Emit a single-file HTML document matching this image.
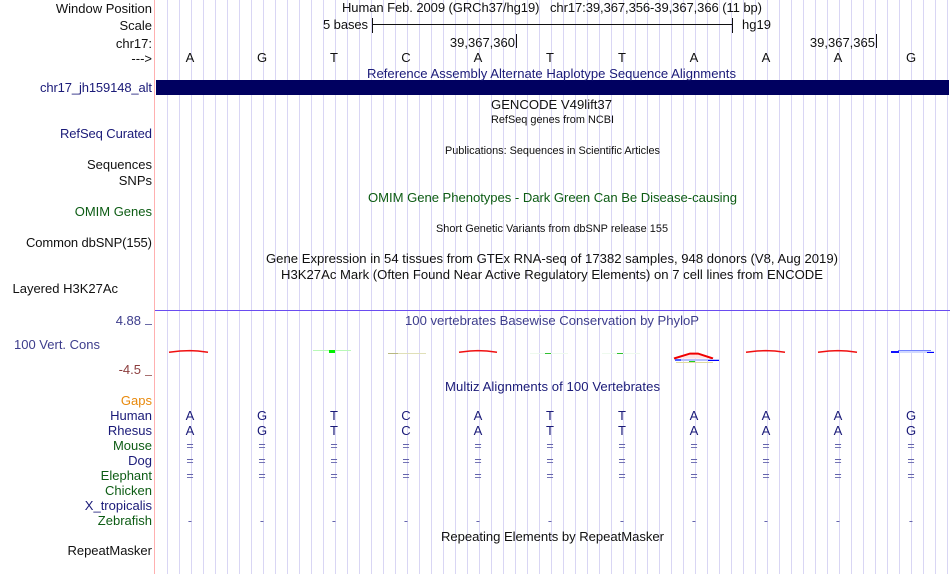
<!DOCTYPE html>
<html><head><meta charset="utf-8"><style>
html,body{margin:0;padding:0;background:#fff;width:950px;height:574px;overflow:hidden}
svg{display:block}
text{font-family:"Liberation Sans",sans-serif;font-size:13px;fill:#111}
.e{text-anchor:end}.m{text-anchor:middle}
.c{text-anchor:middle;font-size:13.1px}
.n{fill:#1a1a78}.g{fill:#0d5c14}.p{fill:#3d3d8c}
.s{font-size:10.9px;text-anchor:middle}
.eq{font-size:12.5px;fill:#6464ac;text-anchor:middle}
</style></head><body>
<svg width="950" height="574" viewBox="0 0 950 574" xmlns="http://www.w3.org/2000/svg">
<path d="M167.5 0V574M179.5 0V574M191.5 0V574M203.5 0V574M215.5 0V574M227.5 0V574M239.5 0V574M251.5 0V574M263.5 0V574M275.5 0V574M287.5 0V574M299.5 0V574M311.5 0V574M323.5 0V574M335.5 0V574M347.5 0V574M359.5 0V574M371.5 0V574M383.5 0V574M395.5 0V574M407.5 0V574M419.5 0V574M431.5 0V574M443.5 0V574M455.5 0V574M467.5 0V574M479.5 0V574M491.5 0V574M503.5 0V574M515.5 0V574M527.5 0V574M539.5 0V574M551.5 0V574M563.5 0V574M575.5 0V574M587.5 0V574M599.5 0V574M611.5 0V574M623.5 0V574M635.5 0V574M647.5 0V574M659.5 0V574M671.5 0V574M683.5 0V574M695.5 0V574M707.5 0V574M719.5 0V574M731.5 0V574M743.5 0V574M755.5 0V574M767.5 0V574M779.5 0V574M791.5 0V574M803.5 0V574M815.5 0V574M827.5 0V574M839.5 0V574M851.5 0V574M863.5 0V574M875.5 0V574M887.5 0V574M899.5 0V574M911.5 0V574M923.5 0V574M935.5 0V574M947.5 0V574" stroke="#d9d6f4" stroke-width="1" fill="none"/>
<rect x="154" y="0" width="1" height="574" fill="#ffb0b0"/>
<rect x="156" y="80" width="793" height="15" fill="#000060"/>
<rect x="155" y="310" width="795" height="1" fill="#6a4cf0"/>

<g class="labels">
<text class="e" x="152" y="13">Window Position</text>
<text class="e" x="152" y="30">Scale</text>
<text class="e" x="152" y="48">chr17:</text>
<text class="e" x="152" y="63">---&gt;</text>
<text class="e n" x="152" y="92" textLength="112">chr17_jh159148_alt</text>
<text class="e n" x="152" y="138" textLength="92">RefSeq Curated</text>
<text class="e" x="152" y="169">Sequences</text>
<text class="e" x="152" y="185">SNPs</text>
<text class="e g" x="152" y="216">OMIM Genes</text>
<text class="e" x="152" y="247" textLength="126">Common dbSNP(155)</text>
<text class="e" x="118" y="293">Layered H3K27Ac</text>
<text class="e p" x="141" y="325">4.88</text>
<text class="e p" x="100" y="349">100 Vert. Cons</text>
<text class="e" x="141" y="374" style="fill:#8c3d3d">-4.5</text>
<text class="e" x="152" y="405" style="fill:#e8890c">Gaps</text>
<text class="e n" x="152" y="420">Human</text>
<text class="e n" x="152" y="435">Rhesus</text>
<text class="e g" x="152" y="450">Mouse</text>
<text class="e n" x="152" y="465">Dog</text>
<text class="e g" x="152" y="480">Elephant</text>
<text class="e g" x="152" y="495">Chicken</text>
<text class="e n" x="152" y="510">X_tropicalis</text>
<text class="e g" x="152" y="525">Zebrafish</text>
<text class="e" x="152" y="555">RepeatMasker</text>
</g>
<rect x="145" y="324" width="7" height="1" fill="#6b6ba8"/>
<rect x="145" y="375" width="7" height="1" fill="#a87070"/>

<text x="342" y="12" textLength="420">Human Feb. 2009 (GRCh37/hg19)&#160;&#160;&#160;chr17:39,367,356-39,367,366 (11 bp)</text>
<text class="e" x="368" y="29" textLength="45">5 bases</text>
<text x="742" y="29">hg19</text>
<rect x="372" y="18" width="1" height="15" fill="#111"/>
<rect x="732" y="18" width="1" height="15" fill="#111"/>
<rect x="372" y="24" width="361" height="1" fill="#111"/>
<text class="e" x="515" y="47">39,367,360</text>
<rect x="516" y="34" width="1" height="14" fill="#111"/>
<text class="e" x="875" y="47">39,367,365</text>
<rect x="876" y="34" width="1" height="14" fill="#111"/>

<g>
<text class="m" x="190" y="62">A</text><text class="m" x="262" y="62">G</text><text class="m" x="334" y="62">T</text><text class="m" x="406" y="62">C</text><text class="m" x="478" y="62">A</text><text class="m" x="550" y="62">T</text><text class="m" x="622" y="62">T</text><text class="m" x="694" y="62">A</text><text class="m" x="766" y="62">A</text><text class="m" x="838" y="62">A</text><text class="m" x="911" y="62">G</text>
</g>

<text class="c n" x="551.5" y="78" textLength="369">Reference Assembly Alternate Haplotype Sequence Alignments</text>
<text class="c" x="551.5" y="109" textLength="121">GENCODE V49lift37</text>
<text class="s" x="552.5" y="123" textLength="123">RefSeq genes from NCBI</text>
<text class="s" x="552.5" y="154" textLength="215">Publications: Sequences in Scientific Articles</text>
<text class="c g" x="552.5" y="202" textLength="369">OMIM Gene Phenotypes - Dark Green Can Be Disease-causing</text>
<text class="s" x="552" y="232" textLength="232">Short Genetic Variants from dbSNP release 155</text>
<text class="c" x="552" y="263" textLength="572">Gene Expression in 54 tissues from GTEx RNA-seq of 17382 samples, 948 donors (V8, Aug 2019)</text>
<text class="c" x="552" y="279" textLength="542">H3K27Ac Mark (Often Found Near Active Regulatory Elements) on 7 cell lines from ENCODE</text>
<text class="c p" x="552" y="325" textLength="294">100 vertebrates Basewise Conservation by PhyloP</text>
<text class="c n" x="552.5" y="391" textLength="215">Multiz Alignments of 100 Vertebrates</text>
<text class="c" x="552.5" y="541" textLength="223">Repeating Elements by RepeatMasker</text>

<g fill="none" stroke="#f01010" stroke-width="1.5">
<path d="M169 352.3 L180 351 L190 350.6 L198 351 L208 352.3"/>
<path d="M459 352.3 L470 351 L478 350.6 L487 351 L497 352.3"/>
<path d="M746 352.3 L757 351 L766 350.6 L775 351 L785 352.3"/>
<path d="M818 352.3 L829 351 L838 350.6 L847 351 L857 352.3"/>
</g>
<path d="M690 354.5 L698 354.5 L708 358.5 L680 358.5Z" fill="#ffe4e4"/>
<path d="M674 358.5 L690 353.6 L698 353.6 L713 358.5" fill="none" stroke="#f00000" stroke-width="2"/>
<rect x="675" y="359" width="44" height="2" fill="#b8c0ff"/>
<rect x="675" y="359" width="6" height="2" fill="#5060ff"/>
<rect x="708" y="360" width="11" height="1" fill="#0000ff"/>
<rect x="689" y="361" width="6" height="1" fill="#20d020"/>
<rect x="676" y="362" width="37" height="1" fill="#e0dca0"/>

<rect x="313" y="350" width="38" height="1" fill="#b8f8b8"/>
<rect x="329" y="350" width="6" height="3" fill="#00f000"/>
<rect x="388" y="353" width="38" height="1" fill="#e0e0b8"/>
<rect x="388" y="353" width="10" height="1" fill="#b8b880"/>
<rect x="530" y="353" width="38" height="1" fill="#eefaee"/>
<rect x="545" y="353" width="6" height="1" fill="#30c030"/>
<rect x="602" y="353" width="38" height="1" fill="#eefaee"/>
<rect x="617" y="353" width="6" height="1" fill="#30c030"/>
<rect x="891" y="351" width="43" height="2" fill="#d0d8ff"/>
<rect x="898" y="350" width="33" height="1" fill="#7080ff"/>
<rect x="891" y="351" width="8" height="2" fill="#1010ff"/>
<rect x="927" y="352" width="7" height="1" fill="#0000ff"/>

<g>
<text class="m n" x="190" y="420">A</text><text class="m n" x="262" y="420">G</text><text class="m n" x="334" y="420">T</text><text class="m n" x="406" y="420">C</text><text class="m n" x="478" y="420">A</text><text class="m n" x="550" y="420">T</text><text class="m n" x="622" y="420">T</text><text class="m n" x="694" y="420">A</text><text class="m n" x="766" y="420">A</text><text class="m n" x="838" y="420">A</text><text class="m n" x="911" y="420">G</text>
<text class="m n" x="190" y="435">A</text><text class="m n" x="262" y="435">G</text><text class="m n" x="334" y="435">T</text><text class="m n" x="406" y="435">C</text><text class="m n" x="478" y="435">A</text><text class="m n" x="550" y="435">T</text><text class="m n" x="622" y="435">T</text><text class="m n" x="694" y="435">A</text><text class="m n" x="766" y="435">A</text><text class="m n" x="838" y="435">A</text><text class="m n" x="911" y="435">G</text>
</g>
<g>
<text class="eq" x="190" y="450">=</text><text class="eq" x="262" y="450">=</text><text class="eq" x="334" y="450">=</text><text class="eq" x="406" y="450">=</text><text class="eq" x="478" y="450">=</text><text class="eq" x="550" y="450">=</text><text class="eq" x="622" y="450">=</text><text class="eq" x="694" y="450">=</text><text class="eq" x="766" y="450">=</text><text class="eq" x="838" y="450">=</text><text class="eq" x="911" y="450">=</text>
<text class="eq" x="190" y="465">=</text><text class="eq" x="262" y="465">=</text><text class="eq" x="334" y="465">=</text><text class="eq" x="406" y="465">=</text><text class="eq" x="478" y="465">=</text><text class="eq" x="550" y="465">=</text><text class="eq" x="622" y="465">=</text><text class="eq" x="694" y="465">=</text><text class="eq" x="766" y="465">=</text><text class="eq" x="838" y="465">=</text><text class="eq" x="911" y="465">=</text>
<text class="eq" x="190" y="480">=</text><text class="eq" x="262" y="480">=</text><text class="eq" x="334" y="480">=</text><text class="eq" x="406" y="480">=</text><text class="eq" x="478" y="480">=</text><text class="eq" x="550" y="480">=</text><text class="eq" x="622" y="480">=</text><text class="eq" x="694" y="480">=</text><text class="eq" x="766" y="480">=</text><text class="eq" x="838" y="480">=</text><text class="eq" x="911" y="480">=</text>
<text class="eq" x="190" y="525">-</text><text class="eq" x="262" y="525">-</text><text class="eq" x="334" y="525">-</text><text class="eq" x="406" y="525">-</text><text class="eq" x="478" y="525">-</text><text class="eq" x="550" y="525">-</text><text class="eq" x="622" y="525">-</text><text class="eq" x="694" y="525">-</text><text class="eq" x="766" y="525">-</text><text class="eq" x="838" y="525">-</text><text class="eq" x="911" y="525">-</text>
</g>
</svg>
</body></html>
